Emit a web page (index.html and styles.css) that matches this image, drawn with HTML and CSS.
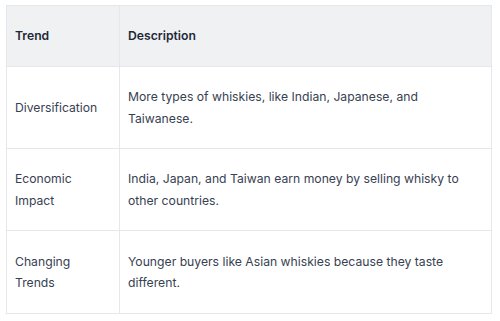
FILE: index.html
```html
<!DOCTYPE html>
<html>
<head>
<meta charset="utf-8">
<link rel="stylesheet" href="styles.css">
</head>
<body>
<div class="wrap">
<table class="trends">
  <thead>
    <tr><th class="c1">Trend</th><th>Description</th></tr>
  </thead>
  <tbody>
    <tr><td>Diversification</td><td>More types of whiskies, like Indian, Japanese, and Taiwanese.</td></tr>
    <tr><td>Economic Impact</td><td>India, Japan, and Taiwan earn money by selling whisky to other countries.</td></tr>
    <tr><td>Changing Trends</td><td>Younger buyers like Asian whiskies because they taste different.</td></tr>
  </tbody>
</table>
</div>
</body>
</html>
```
FILE: styles.css
```css
html, body { margin: 0; padding: 0; background: #ffffff; }
.wrap { padding: 5px 8px 0 6px; }
.trends {
  width: 486px;
  border-collapse: collapse;
  font-family: Inter, "Noto Sans", sans-serif;
  font-size: 12.2px;
  line-height: 21.33px;
  color: #374151;
}
.trends th, .trends td {
  border: 1px solid #e5e7eb;
  padding: 19.3px 8px;
  text-align: left;
  vertical-align: middle;
}
.trends th {
  background: #f0f1f3;
  font-weight: 600;
  color: #1f2937;
}
.trends .c1 { width: 96px; }
```
